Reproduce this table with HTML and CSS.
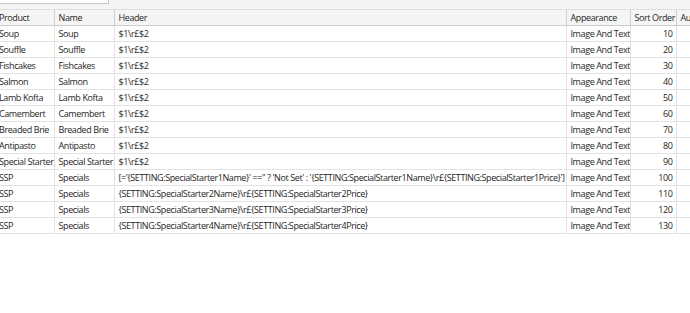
FILE: index.html
```html
<!DOCTYPE html>
<html>
<head>
<meta charset="utf-8">
<link rel="stylesheet" href="styles.css">
</head>
<body>
<div class="page">
  <div class="toolbar"><div class="search"></div></div>
  <div class="grid-wrap">
    <table class="grid">
      <colgroup>
        <col class="c-product"><col class="c-name"><col class="c-header"><col class="c-appearance"><col class="c-sort"><col class="c-auto">
      </colgroup>
      <thead>
        <tr><th>Product</th><th>Name</th><th>Header</th><th>Appearance</th><th>Sort Order</th><th>Auto</th></tr>
      </thead>
      <tbody>
        <tr><td>Soup</td><td>Soup</td><td>$1\r£$2</td><td>Image And Text</td><td class="num">10</td><td></td></tr>
        <tr><td>Souffle</td><td>Souffle</td><td>$1\r£$2</td><td>Image And Text</td><td class="num">20</td><td></td></tr>
        <tr><td>Fishcakes</td><td>Fishcakes</td><td>$1\r£$2</td><td>Image And Text</td><td class="num">30</td><td></td></tr>
        <tr><td>Salmon</td><td>Salmon</td><td>$1\r£$2</td><td>Image And Text</td><td class="num">40</td><td></td></tr>
        <tr><td>Lamb Kofta</td><td>Lamb Kofta</td><td>$1\r£$2</td><td>Image And Text</td><td class="num">50</td><td></td></tr>
        <tr><td>Camembert</td><td>Camembert</td><td>$1\r£$2</td><td>Image And Text</td><td class="num">60</td><td></td></tr>
        <tr><td>Breaded Brie</td><td>Breaded Brie</td><td>$1\r£$2</td><td>Image And Text</td><td class="num">70</td><td></td></tr>
        <tr><td>Antipasto</td><td>Antipasto</td><td>$1\r£$2</td><td>Image And Text</td><td class="num">80</td><td></td></tr>
        <tr><td>Special Starter</td><td>Special Starter</td><td>$1\r£$2</td><td>Image And Text</td><td class="num">90</td><td></td></tr>
        <tr><td>SSP</td><td>Specials</td><td>[='{SETTING:SpecialStarter1Name}' =='' ? 'Not Set' : '{SETTING:SpecialStarter1Name}\r£{SETTING:SpecialStarter1Price}']</td><td>Image And Text</td><td class="num">100</td><td></td></tr>
        <tr><td>SSP</td><td>Specials</td><td>{SETTING:SpecialStarter2Name}\r£{SETTING:SpecialStarter2Price}</td><td>Image And Text</td><td class="num">110</td><td></td></tr>
        <tr><td>SSP</td><td>Specials</td><td>{SETTING:SpecialStarter3Name}\r£{SETTING:SpecialStarter3Price}</td><td>Image And Text</td><td class="num">120</td><td></td></tr>
        <tr><td>SSP</td><td>Specials</td><td>{SETTING:SpecialStarter4Name}\r£{SETTING:SpecialStarter4Price}</td><td>Image And Text</td><td class="num">130</td><td></td></tr>
      </tbody>
    </table>
  </div>
</div>
</body>
</html>
```
FILE: styles.css
```css
html, body {
  margin: 0;
  padding: 0;
  background: #ffffff;
}
.page {
  width: 690px;
  height: 313px;
  overflow: hidden;
  font-family: "Open Sans", "Noto Sans", sans-serif;
  font-size: 9px;
  letter-spacing: -0.4px;
  color: #262626;
}
.toolbar {
  height: 9px;
  background: #f5f5f5;
  border-bottom: 1px solid #dcdcdc;
  position: relative;
  overflow: hidden;
}
.search {
  position: absolute;
  left: -2px;
  top: -20px;
  width: 109px;
  height: 22px;
  background: #ffffff;
  border: 1px solid #c8c8c8;
}
.grid-wrap {
  margin-left: -5px;
  overflow: hidden;
}
.grid {
  border-collapse: collapse;
  table-layout: fixed;
  width: 740px;
}
.c-product { width: 59px; }
.c-name { width: 60px; }
.c-header { width: 452px; }
.c-appearance { width: 64px; }
.c-sort { width: 46px; }
.c-auto { width: 59px; }
.grid th, .grid td {
  height: 15px;
  padding: 0 3px 0 4px;
  white-space: nowrap;
  overflow: hidden;
  text-align: left;
  font-weight: normal;
  line-height: 15px;
  border-right: 1px solid #e2e2e2;
  border-bottom: 1px solid #e2e2e2;
}
.grid th {
  background: #f5f5f5;
  border-right: 1px solid #d0d0d0;
  border-bottom: 1px solid #cccccc;
}
.grid td.num {
  text-align: right;
}
```
